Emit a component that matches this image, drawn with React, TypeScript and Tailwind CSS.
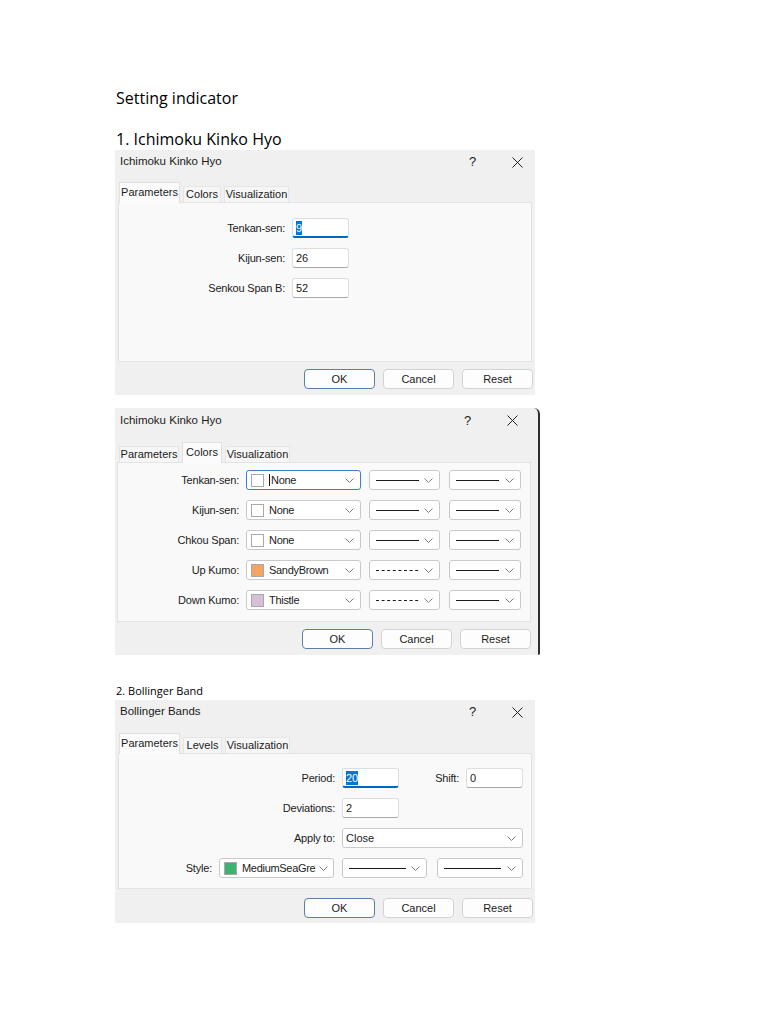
import React from 'react';

const UI = "font-['Liberation_Sans',Arial,sans-serif]";

function Chevron() {
  return (
    <svg width="9" height="5" viewBox="0 0 9 5" className="shrink-0">
      <path d="M0.5 0.5 L4.5 4.5 L8.5 0.5" fill="none" stroke="#6f6f6f" strokeWidth="0.9" />
    </svg>
  );
}

function CloseIcon() {
  return (
    <svg width="11" height="11" viewBox="0 0 11 11">
      <path d="M0.5 0.5 L10.5 10.5 M10.5 0.5 L0.5 10.5" stroke="#1f1f1f" strokeWidth="1" />
    </svg>
  );
}

function TextBox({ value, focused = false, selected = false }: { value: string; focused?: boolean; selected?: boolean }) {
  return (
    <div
      className={
        'h-[20px] w-[57px] bg-white border border-[#dedede] rounded-[3px] flex items-center pl-[3px] text-[11px] text-[#1b1b1b] ' +
        (focused ? 'border-b-2 border-b-[#0067c0]' : 'border-b-[#a8a8a8]')
      }
    >
      {selected ? <span className="bg-[#0078d7] text-white leading-[14px]">{value}</span> : value}
    </div>
  );
}

function ColorSelect({ color, name, focused = false, w = 115 }: { color: string; name: string; focused?: boolean; w?: number }) {
  return (
    <div
      style={{ width: w }}
      className={
        'h-[20px] shrink-0 bg-white border rounded-[3px] flex items-center pl-[4px] pr-[6px] text-[11px] text-[#1b1b1b] ' +
        (focused ? 'border-[#3d7fc4]' : 'border-[#c9c9c9]')
      }
    >
      <span style={{ backgroundColor: color }} className="w-[13px] h-[13px] border border-[#a9a9a9] shrink-0" />
      <span className="ml-[5px] flex items-center tracking-[-0.3px]">
        {focused && <span className="w-px h-[12px] bg-[#111] mr-px" />}
        {name}
      </span>
      <span className="ml-auto pl-[4px]">
        <Chevron />
      </span>
    </div>
  );
}

function LineSelect({ dashed = false, w = 71, line = 43 }: { dashed?: boolean; w?: number; line?: number }) {
  return (
    <div
      style={{ width: w }}
      className="h-[20px] shrink-0 bg-white border border-[#c9c9c9] rounded-[3px] flex items-center pl-[6px] pr-[6px]"
    >
      <svg width={line} height="3" viewBox={`0 0 ${line} 3`}>
        <line x1="0" y1="1.5" x2={line} y2="1.5" stroke="#1a1a1a" strokeWidth="1" strokeDasharray={dashed ? '3 2.6' : undefined} />
      </svg>
      <span className="ml-auto">
        <Chevron />
      </span>
    </div>
  );
}

function Button({ label, primary = false }: { label: string; primary?: boolean }) {
  return (
    <div
      className={
        'h-[20px] w-[71px] rounded-[4px] flex items-center justify-center text-[11px] text-[#1b1b1b] bg-[#fdfdfd] border ' +
        (primary ? 'border-[#5b7fa6]' : 'border-[#d3d3d3]')
      }
    >
      {label}
    </div>
  );
}

type Tab = { label: string; w: number };

function Dialog({
  title,
  tabs,
  active,
  panelH,
  titleH,
  tabsPt,
  footerPt,
  footerPb,
  edge = false,
  children,
}: {
  title: string;
  tabs: Tab[];
  active: number;
  panelH: number;
  titleH: number;
  tabsPt: number;
  footerPt: number;
  footerPb: number;
  edge?: boolean;
  children: React.ReactNode;
}) {
  return (
    <div
      className={
        UI +
        ' bg-[#f0f0f0] ' +
        (edge ? 'w-[425px] border-r-2 border-r-[#2e2e2e] rounded-tr-[6px] rounded-br-[2px]' : 'w-[420px]')
      }
    >
      <div style={{ height: titleH }} className="flex items-center pl-[5px] text-[11.5px] text-[#1b1b1b]">
        <span>{title}</span>
        <span className="ml-auto text-[13px] w-[10px] mr-[33px]">?</span>
        <span className={edge ? 'mr-[20px]' : 'mr-[12px]'}>
          <CloseIcon />
        </span>
      </div>
      <div style={{ paddingTop: tabsPt }} className="flex items-end gap-[3px] pl-[4px] h-auto">
        {tabs.map((t, i) => (
          <div
            key={t.label}
            style={{ width: t.w }}
            className={
              'flex items-center justify-center text-[11px] text-[#1b1b1b] border border-b-0 ' +
              (i === active
                ? 'h-[21px] bg-[#fbfbfb] border-[#e0e0e0] relative z-10 -mb-px pb-[2px]'
                : 'h-[16px] bg-[#f6f6f6] border-[#e6e6e6]')
            }
          >
            {t.label}
          </div>
        ))}
      </div>
      <div
        style={{ height: panelH }}
        className={'bg-[#f9f9f9] border border-[#e3e3e3] ' + (edge ? 'ml-[2px] mr-[7px]' : 'mx-[3px]')}
      >
        {children}
      </div>
      <div
        style={{ paddingTop: footerPt, paddingBottom: footerPb }}
        className={'flex justify-end gap-[8px] ' + (edge ? 'pr-[7px]' : 'pr-[2px]')}
      >
        <Button label="OK" primary />
        <Button label="Cancel" />
        <Button label="Reset" />
      </div>
    </div>
  );
}

function Label({ w, children }: { w: number; children: React.ReactNode }) {
  return (
    <div style={{ width: w }} className="shrink-0 text-right pr-[7px] text-[11px] text-[#1b1b1b] tracking-[-0.2px]">
      {children}
    </div>
  );
}

const kumoRows = [
  { label: 'Tenkan-sen:', color: '#ffffff', name: 'None', dashed: false, focused: true },
  { label: 'Kijun-sen:', color: '#ffffff', name: 'None', dashed: false },
  { label: 'Chkou Span:', color: '#ffffff', name: 'None', dashed: false },
  { label: 'Up Kumo:', color: '#f4a460', name: 'SandyBrown', dashed: true },
  { label: 'Down Kumo:', color: '#d8bfd8', name: 'Thistle', dashed: true },
];

export default function App() {
  return (
    <div className="min-h-screen bg-white pl-[115px] pt-[87px] text-black">
      <h1 className="font-['Open_Sans',sans-serif] text-[16px] leading-[22px] pl-px">Setting indicator</h1>
      <h2 className="font-['Open_Sans',sans-serif] text-[16px] leading-[22px] pl-px mt-[19px]">1. Ichimoku Kinko Hyo</h2>

      {/* Ichimoku - Parameters */}
      <Dialog
        title="Ichimoku Kinko Hyo"
        tabs={[
          { label: 'Parameters', w: 61 },
          { label: 'Colors', w: 38 },
          { label: 'Visualization', w: 65 },
        ]}
        active={0}
        titleH={24}
        tabsPt={8}
        panelH={160}
        footerPt={7}
        footerPb={6}
      >
        <div className="flex flex-col gap-[10px] pt-[15px]">
          <div className="flex items-center">
            <Label w={173}>Tenkan-sen:</Label>
            <TextBox value="9" focused selected />
          </div>
          <div className="flex items-center">
            <Label w={173}>Kijun-sen:</Label>
            <TextBox value="26" />
          </div>
          <div className="flex items-center">
            <Label w={173}>Senkou Span B:</Label>
            <TextBox value="52" />
          </div>
        </div>
      </Dialog>

      {/* Ichimoku - Colors */}
      <div className="mt-[13px]">
        <Dialog
          title="Ichimoku Kinko Hyo"
          tabs={[
            { label: 'Parameters', w: 60 },
            { label: 'Colors', w: 40 },
            { label: 'Visualization', w: 65 },
          ]}
          active={1}
          titleH={25}
          tabsPt={9}
          panelH={160}
          footerPt={7}
          footerPb={6}
          edge
        >
          <div className="flex flex-col gap-[10px] pt-[7px]">
            {kumoRows.map(r => (
              <div key={r.label} className="flex items-center">
                <Label w={128}>{r.label}</Label>
                <ColorSelect color={r.color} name={r.name} focused={r.focused} />
                <div className="ml-[8px]">
                  <LineSelect dashed={r.dashed} />
                </div>
                <div className="ml-[9px]">
                  <LineSelect w={72} />
                </div>
              </div>
            ))}
          </div>
        </Dialog>
      </div>

      <h3 className="font-['Open_Sans',sans-serif] text-[11px] leading-[15px] pl-px mt-[28px]">2. Bollinger Band</h3>

      {/* Bollinger Bands */}
      <div className="mt-[2px]">
        <Dialog
          title="Bollinger Bands"
          tabs={[
            { label: 'Parameters', w: 61 },
            { label: 'Levels', w: 39 },
            { label: 'Visualization', w: 65 },
          ]}
          active={0}
          titleH={24}
          tabsPt={9}
          panelH={136}
          footerPt={9}
          footerPb={5}
        >
          <div className="flex flex-col gap-[10px] pt-[14px]">
            <div className="flex items-center">
              <Label w={223}>Period:</Label>
              <TextBox value="20" focused selected />
              <Label w={67}>Shift:</Label>
              <TextBox value="0" />
            </div>
            <div className="flex items-center">
              <Label w={223}>Deviations:</Label>
              <TextBox value="2" />
            </div>
            <div className="flex items-center">
              <Label w={223}>Apply to:</Label>
              <div className="h-[20px] w-[181px] bg-white border border-[#c9c9c9] rounded-[3px] flex items-center pl-[3px] pr-[6px] text-[11px] text-[#1b1b1b]">
                Close
                <span className="ml-auto">
                  <Chevron />
                </span>
              </div>
            </div>
            <div className="flex items-center">
              <Label w={100}>Style:</Label>
              <ColorSelect color="#3cb371" name="MediumSeaGre" />
              <div className="ml-[8px]">
                <LineSelect w={85} line={57} />
              </div>
              <div className="ml-[10px]">
                <LineSelect w={86} line={57} />
              </div>
            </div>
          </div>
        </Dialog>
      </div>
    </div>
  );
}
